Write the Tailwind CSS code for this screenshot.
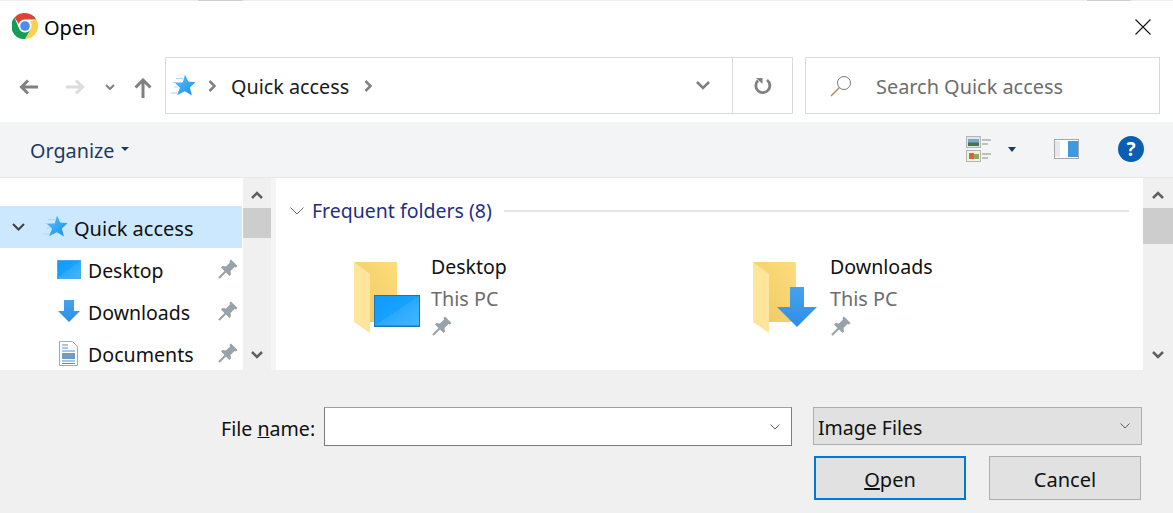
<!DOCTYPE html>
<html lang="en">
  <head>
    <meta charset="UTF-8" />
    <title>Open</title>
    <script src="https://cdn.jsdelivr.net/npm/@tailwindcss/browser@4"></script>
  </head>
  <body class="w-[1173px] h-[513px] overflow-hidden bg-white text-[20px] leading-[28px] text-black font-['Noto_Sans','Open_Sans',sans-serif]">
    <svg width="0" height="0" class="absolute">
      <defs>
        <linearGradient id="starfill" x1="0" x2="1" y1="0" y2="1">
          <stop offset="0" stop-color="#5cc0fc" />
          <stop offset="1" stop-color="#1690ec" />
        </linearGradient>
        <linearGradient id="folderback" x1="0" x2="1" y1="1" y2="0">
          <stop offset="0" stop-color="#eec764" />
          <stop offset="1" stop-color="#fedd7c" />
        </linearGradient>
        <linearGradient id="screenfill" x1="0" x2="1" y1="0" y2="1">
          <stop offset="0" stop-color="#0f9bff" />
          <stop offset=".5" stop-color="#17a2ff" />
          <stop offset=".5" stop-color="#28a9ff" />
          <stop offset="1" stop-color="#45b6ff" />
        </linearGradient>
        <linearGradient id="arrowfill" x1="0" x2="0" y1="0" y2="1">
          <stop offset="0" stop-color="#46a2ee" />
          <stop offset="1" stop-color="#2f8ee6" />
        </linearGradient>
        <symbol id="star" viewBox="0 0 26 24">
          <path d="M6 4.500h7M3 8.500h5M4 13h4M1 19h6" stroke="#a9d8fa" stroke-width="1" />
          <path d="M15 .500l3.200 7 7.300.7-5.600 5.300 2 8-7-4.200-7.900 4 3-7.500L5 9l7.800-.8z" fill="url(#starfill)" />
        </symbol>
        <symbol id="pin" viewBox="0 0 20 20">
          <path d="M13 .500l6.500 6.500-1.500 1.500-1.500-.5-4 4 .5 3.500-1.500 1.500-8.500-8.500 1.500-1.500 3.500.5 4-4-.5-1.500z" fill="#98a2a9" />
          <path d="M7.500 12.500L1 19" stroke="#98a2a9" stroke-width="2.200" />
        </symbol>
        <symbol id="folder" viewBox="0 0 66 72">
          <path d="M0 0h43v60H15V15z" fill="url(#folderback)" />
          <path d="M0 0l16 12v59L0 60z" fill="#fde59c" />
        </symbol>
      </defs>
    </svg>

    <div class="h-px flex bg-[#eeeeee]">
      <div class="ml-[198px] w-[45px] bg-[#d0d0d0]"></div>
      <div class="ml-[844px] w-[44px] bg-[#d0d0d0]"></div>
    </div>

    <!-- title bar -->
    <div class="h-[56px] flex items-center pl-3 pr-[22px]">
      <svg width="26" height="26" viewBox="0 0 26 26" class="mb-[6px]">
        <path d="M13 0a13 13 0 0 1 11.300 6.500H13a6.500 6.500 0 0 0-6.200 4.500L2.500 4.500A13 13 0 0 1 13 0z" fill="#db4437" />
        <path d="M24.300 6.500A13 13 0 0 1 13 26l5.600-9.800A6.500 6.500 0 0 0 17.900 8.700z" fill="#fcd04a" />
        <path d="M2.500 4.500A13 13 0 0 0 13 26l5.600-9.800A6.500 6.500 0 0 1 7.300 16z" fill="#169c57" />
        <circle cx="13" cy="13" r="6" fill="#fff" />
        <circle cx="13" cy="13" r="4.800" fill="#4e8bf0" />
      </svg>
      <span class="ml-[6px] mb-[2px] text-[20px]">Open</span>
      <svg width="16" height="16" viewBox="0 0 16 16" class="ml-auto mb-[5px]">
        <path d="M.5.500l15 15M15.500.500l-15 15" stroke="#111" stroke-width="1.100" />
      </svg>
    </div>

    <!-- address row -->
    <div class="h-[65px] flex items-start">
      <div class="w-[165px] h-[57px] flex items-center pl-[19px] pt-[2px]">
        <svg width="20" height="16" viewBox="0 0 20 16">
          <path d="M19 8H3M9 1.500L2.500 8 9 14.500" fill="none" stroke="#808080" stroke-width="3" />
        </svg>
        <svg width="20" height="16" viewBox="0 0 20 16" class="ml-[26px]">
          <path d="M1 8h16M11 1.500L17.500 8 11 14.500" fill="none" stroke="#dcdcdc" stroke-width="3" />
        </svg>
        <svg width="10" height="6" viewBox="0 0 10 6" class="ml-[20px]">
          <path d="M1 1l4 4 4-4" fill="none" stroke="#808080" stroke-width="2" />
        </svg>
        <svg width="18" height="20" viewBox="0 0 18 20" class="ml-[19px] mt-[2px]">
          <path d="M9 20V3M1.500 9.500L9 2l7.500 7.500" fill="none" stroke="#808080" stroke-width="3" />
        </svg>
      </div>
      <div class="w-[628px] h-[57px] border border-[#d9d9d9] flex items-center">
        <svg width="26" height="24" class="ml-[4px]"><use href="#star" /></svg>
        <svg width="8" height="12" viewBox="0 0 8 12" class="ml-[12px]">
          <path d="M1.500 1l5 5-5 5" fill="none" stroke="#808080" stroke-width="2.500" />
        </svg>
        <span class="ml-[15px] pt-[2px] text-[19.8px] text-[#1a1a1a]">Quick access</span>
        <svg width="8" height="12" viewBox="0 0 8 12" class="ml-[15px]">
          <path d="M1.500 1l5 5-5 5" fill="none" stroke="#808080" stroke-width="2.500" />
        </svg>
        <svg width="14" height="9" viewBox="0 0 14 9" class="ml-auto mr-[22px]">
          <path d="M1 1l6 6 6-6" fill="none" stroke="#808080" stroke-width="2.500" />
        </svg>
        <div class="w-[60px] h-full border-l border-[#d9d9d9] flex items-center justify-center">
          <svg width="18" height="18" viewBox="0 0 18 18">
            <path d="M4 3.500A7 7 0 1 0 13 3" fill="none" stroke="#808080" stroke-width="2.800" />
            <path d="M2 1h6.500v6z" fill="#808080" />
          </svg>
        </div>
      </div>
      <div class="ml-3 w-[355px] h-[57px] border border-[#d9d9d9] flex items-center pl-[24px]">
        <svg width="22" height="22" viewBox="0 0 22 22">
          <circle cx="14" cy="8" r="6.500" fill="none" stroke="#7a7a7a" stroke-width="1" />
          <path d="M9.500 12.500L1 21" stroke="#b08a5a" stroke-width="1.400" />
        </svg>
        <span class="ml-[24px] pt-[2px] text-[19.9px] text-[#6d6d6d]">Search Quick access</span>
      </div>
    </div>

    <!-- toolbar -->
    <div class="h-[56px] bg-[#f3f4f6] border-b border-[#e6e6e6] flex items-center pl-[30px] pb-[1px]">
      <span class="w-[84px] pt-[4px] text-[19.8px] text-[#1e3a5f]">Organize</span>
      <div class="ml-[7px] w-0 h-0 border-x-[4px] border-x-transparent border-t-[4px] border-t-[#1e3a5f]"></div>
      <svg width="26" height="26" viewBox="0 0 26 26" class="ml-[837px]">
        <rect x=".5" y=".5" width="14" height="11" fill="#dfe6e8" stroke="#b5b5b5" />
        <rect x="2" y="3" width="11" height="7" fill="#7aa8c8" />
        <rect x="2" y="6.500" width="11" height="3.500" fill="#4e7050" />
        <rect x=".5" y="14.500" width="14" height="11" fill="#eef2d8" stroke="#b5b5b5" />
        <rect x="3" y="17" width="5" height="6" fill="#d8643c" />
        <rect x="8" y="18" width="5" height="5" fill="#8cae58" />
        <path d="M16 4h9M16 8h6M16 18h9M16 22h6" stroke="#8a8a8a" />
      </svg>
      <div class="ml-[16px] w-0 h-0 border-x-[4px] border-x-transparent border-t-[5px] border-t-[#1e3a5f]"></div>
      <svg width="25" height="20" viewBox="0 0 25 20" class="ml-[38px]">
        <rect x=".5" y=".5" width="24" height="19" fill="#fff" stroke="#a8a8a8" />
        <rect x="1" y="2" width="5" height="16" fill="#e8e8e8" />
        <rect x="14" y="2" width="10" height="16" fill="#3f98e0" />
      </svg>
      <div class="ml-[39px] w-[26px] h-[26px] rounded-full bg-[#0a5fb4] flex items-center justify-center text-white font-bold text-[19px]">?</div>
    </div>

    <!-- browser panes -->
    <div class="h-[192px] flex">
      <div class="w-[243px] pt-[28px]">
        <div class="h-[42px] mr-px bg-[#cce8ff] flex items-center pl-[12px]">
          <svg width="13" height="8" viewBox="0 0 13 8">
            <path d="M1 1l5.500 5.500L12 1" fill="none" stroke="#404040" stroke-width="2" />
          </svg>
          <svg width="26" height="24" class="ml-[17px]"><use href="#star" /></svg>
          <span class="ml-[6px] pt-[4px] text-[#111]">Quick access</span>
        </div>
        <div class="h-[42px] flex items-center pl-[57px] pr-[5px]">
          <svg width="24" height="19" viewBox="0 0 24 19">
            <rect width="24" height="19" fill="#4aa8ee" />
            <rect x="1" y="1" width="22" height="16.500" fill="url(#screenfill)" />
          </svg>
          <span class="ml-[7px] pt-[4px] text-[19.4px] text-[#111]">Desktop</span>
          <svg width="20" height="20" class="ml-auto"><use href="#pin" /></svg>
        </div>
        <div class="h-[42px] flex items-center pl-[57px] pr-[5px]">
          <svg width="24" height="24" viewBox="0 0 24 24">
            <path d="M7 1h10v11h6L12 23 1 12h6z" fill="url(#arrowfill)" />
          </svg>
          <span class="ml-[7px] pt-[4px] text-[19.5px] text-[#111]">Downloads</span>
          <svg width="20" height="20" class="ml-auto"><use href="#pin" /></svg>
        </div>
        <div class="h-[42px] flex items-center pl-[59px] pr-[5px]">
          <svg width="19" height="25" viewBox="0 0 19 25">
            <path d="M.5.500h13l5 5v19H.5z" fill="#fff" stroke="#a8a8a8" />
            <path d="M3 4h6M3 7h6M3 10h13M3 20h13M3 22.500h13" stroke="#4a90d0" />
            <rect x="3" y="12" width="13" height="6" fill="#6f9cc0" />
          </svg>
          <span class="ml-[10px] pt-[4px] text-[19.6px] text-[#111]">Documents</span>
          <svg width="20" height="20" class="ml-auto"><use href="#pin" /></svg>
        </div>
      </div>

      <div class="w-[28px] bg-[#f0f0f0] flex flex-col items-stretch">
        <div class="h-[30px] pt-[4px] flex items-center justify-center">
          <svg width="12" height="8" viewBox="0 0 12 8"><path d="M1 7l5-5 5 5" fill="none" stroke="#606060" stroke-width="2.500" /></svg>
        </div>
        <div class="h-[30px] bg-[#cdcdcd]"></div>
        <div class="mt-auto h-[30px] flex items-center justify-center pb-[1px]">
          <svg width="12" height="8" viewBox="0 0 12 8"><path d="M1 1l5 5 5-5" fill="none" stroke="#606060" stroke-width="2.500" /></svg>
        </div>
      </div>
      <div class="w-[5px] bg-[#f5f5f5]"></div>

      <div class="w-[867px] pl-[14px] pr-[14px]">
        <div class="h-[48px] pt-[18px] flex items-center">
          <svg width="14" height="8" viewBox="0 0 14 8"><path d="M.5.500L7 7 13.500.500" fill="none" stroke="#707070" /></svg>
          <span class="ml-[8px] text-[19.5px] text-[#1f2f80]">Frequent folders (8)</span>
          <div class="ml-[12px] flex-1 h-[2px] bg-[#e5e5e5]"></div>
        </div>
        <div class="flex pt-[23px] pl-[64px]">
          <div class="w-[399px] flex relative">
            <svg width="66" height="72" class="mt-[13px]"><use href="#folder" /></svg>
            <svg width="46" height="33" viewBox="0 0 46 33" class="absolute left-[20px] top-[46px]">
              <rect width="46" height="32" fill="#1778b8" />
              <rect x="1" y="1" width="44" height="29.500" fill="url(#screenfill)" />
            </svg>
            <div class="ml-[11px] mt-[2px] flex flex-col">
              <span class="h-[32px] leading-[32px] text-[19.5px] text-[#111]">Desktop</span>
              <span class="h-[32px] leading-[32px] text-[19.8px] text-[#6d6d6d]">This PC</span>
              <svg width="20" height="20" class="mt-[1px] ml-px"><use href="#pin" /></svg>
            </div>
          </div>
          <div class="flex relative">
            <svg width="66" height="72" class="mt-[13px]"><use href="#folder" /></svg>
            <svg width="40" height="40" viewBox="0 0 40 40" class="absolute left-[24px] top-[38px]">
              <path d="M13 0h14v20h13L20 40 0 20h13z" fill="url(#arrowfill)" />
            </svg>
            <div class="ml-[11px] mt-[2px] flex flex-col">
              <span class="h-[32px] leading-[32px] text-[19.6px] text-[#111]">Downloads</span>
              <span class="h-[32px] leading-[32px] text-[19.8px] text-[#6d6d6d]">This PC</span>
              <svg width="20" height="20" class="mt-[1px] ml-px"><use href="#pin" /></svg>
            </div>
          </div>
        </div>
      </div>

      <div class="w-[30px] bg-[#f0f0f0] flex flex-col items-stretch">
        <div class="h-[30px] pt-[4px] flex items-center justify-center">
          <svg width="12" height="8" viewBox="0 0 12 8"><path d="M1 7l5-5 5 5" fill="none" stroke="#606060" stroke-width="2.500" /></svg>
        </div>
        <div class="h-[36px] bg-[#cdcdcd]"></div>
        <div class="mt-auto h-[30px] flex items-center justify-center pb-[1px]">
          <svg width="12" height="8" viewBox="0 0 12 8"><path d="M1 1l5 5 5-5" fill="none" stroke="#606060" stroke-width="2.500" /></svg>
        </div>
      </div>
    </div>

    <!-- file name and buttons -->
    <div class="h-[143px] bg-[#f0f0f0] pt-[37px]">
      <div class="flex items-start pl-[221px]">
        <label class="w-[103px] h-[39px] pt-[4px] flex items-center text-[19.6px] text-[#111]">File&nbsp;<span class="underline">n</span>ame:</label>
        <div class="w-[468px] h-[39px] bg-white border border-[#7a7a7a] border-t-[#a0a0a0] flex items-center justify-end pr-[11px]">
          <svg width="10" height="6" viewBox="0 0 10 6"><path d="M.5.500L5 5 9.500.500" fill="none" stroke="#606060" /></svg>
        </div>
        <div class="ml-[21px] w-[329px] h-[38px] bg-[#e1e1e1] border border-[#adadad] flex items-center pl-[4px] pr-[11px] justify-between text-[#111]">
          <span class="pt-[4px] text-[19.5px]">Image Files</span>
          <svg width="10" height="6" viewBox="0 0 10 6"><path d="M.5.500L5 5 9.500.500" fill="none" stroke="#606060" /></svg>
        </div>
      </div>
      <div class="flex pl-[814px] pt-[10px]">
        <button class="w-[152px] h-[44px] pt-[4px] bg-[#e1e1e1] border-2 border-[#0078d7] text-[#111]"><span class="underline">O</span>pen</button>
        <button class="ml-[23px] w-[152px] h-[44px] pt-[4px] bg-[#e1e1e1] border border-[#adadad] text-[#111]">Cancel</button>
      </div>
    </div>
  </body>
</html>
